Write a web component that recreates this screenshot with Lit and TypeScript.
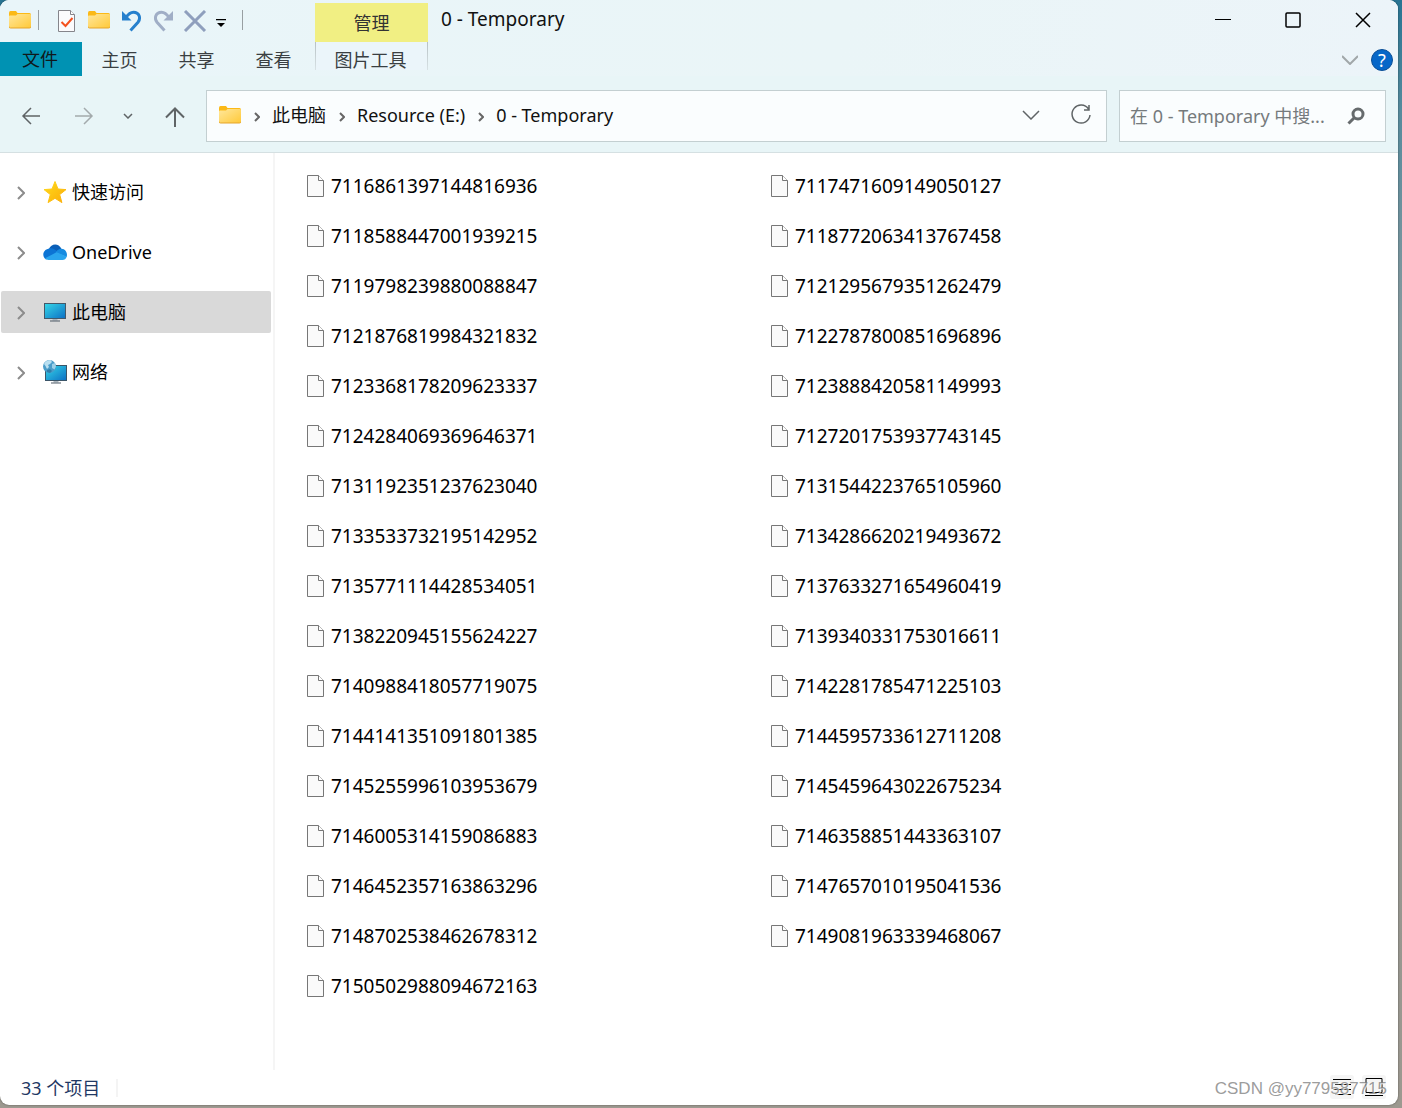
import { LitElement, html, css, svg } from "lit";
import { customElement, property, state } from "lit/decorators.js";

const FILES = [
  "7116861397144816936", "7117471609149050127",
  "7118588447001939215", "7118772063413767458",
  "7119798239880088847", "7121295679351262479",
  "7121876819984321832", "7122787800851696896",
  "7123368178209623337", "7123888420581149993",
  "7124284069369646371", "7127201753937743145",
  "7131192351237623040", "7131544223765105960",
  "7133533732195142952", "7134286620219493672",
  "7135771114428534051", "7137633271654960419",
  "7138220945155624227", "7139340331753016611",
  "7140988418057719075", "7142281785471225103",
  "7144141351091801385", "7144595733612711208",
  "7145255996103953679", "7145459643022675234",
  "7146005314159086883", "7146358851443363107",
  "7146452357163863296", "7147657010195041536",
  "7148702538462678312", "7149081963339468067",
  "7150502988094672163",
];

const folderIcon = html`<svg width="22" height="18" viewBox="0 0 22 18" aria-hidden="true">
  <defs><linearGradient id="f" x1="0" y1="0" x2="1" y2="1"><stop offset="0" stop-color="#ffe79c"/><stop offset="1" stop-color="#ffc938"/></linearGradient></defs>
  <path d="M0 2q0-2 1.500-2h5.500l1.500 2H20.500q1.500 0 1.500 1.500V10H0z" fill="#fbb917"/>
  <path d="M0 5.500q0-1 1-1h6l1.500-1.500H21q1 0 1 1V15.500q0 1.500-1.500 1.500h-19Q0 17 0 15.500z" fill="url(#f)"/>
  <path d="M0 15.500Q0 17 1.500 17h19q1.500 0 1.500-1.500" fill="none" stroke="#e5a52a" stroke-width="1"/>
</svg>`;

const fileIcon = html`<svg width="18" height="22" viewBox="0 0 18 22" aria-hidden="true">
  <path d="M.5.5h11l5 5v16H.5z" fill="#fafafa" stroke="#777"/>
  <path d="M11.500.5v5h5" fill="#fff" stroke="#777"/>
</svg>`;

const checkedPageIcon = html`<svg width="18" height="22" viewBox="0 0 18 22" aria-hidden="true">
  <path d="M.5.500h12l4 4v17H.5z" fill="#fbfbfd" stroke="#85858b"/>
  <path d="M12.500.5v4h4" fill="#fff" stroke="#85858b"/>
  <path d="M3.500 12l4 4 7-8" fill="none" stroke="#f4511e" stroke-width="2"/>
</svg>`;

const undoShape = svg`<path d="M4 7.500C6.500 3.500 9 2.200 11.500 2.200c6 0 7.500 6.300 4.500 10L8.500 20.500" fill="none" stroke="currentColor" stroke-width="3"/><path d="M0 1v9.500h9.500z" fill="currentColor"/>`;
const undoIcon = html`<svg width="20" height="22" viewBox="0 0 20 22" aria-hidden="true">${undoShape}</svg>`;
const redoIcon = html`<svg width="20" height="22" viewBox="0 0 20 22" aria-hidden="true"><g transform="matrix(-1 0 0 1 19 0)">${undoShape}</g></svg>`;

const starIcon = html`<svg width="24" height="24" viewBox="0 0 24 24" aria-hidden="true">
  <defs><linearGradient id="s" x1="0" y1="0" x2="1" y2="1"><stop offset="0" stop-color="#ffdb1c"/><stop offset="1" stop-color="#fbac08"/></linearGradient></defs>
  <path d="M12 1.500l3 7.500 8 .6-6.300 5 2.200 8L12 18.300 5.100 22.600l2.200-8L1 9.600 9 9z" fill="url(#s)" stroke="url(#s)" stroke-linejoin="round"/>
</svg>`;

const cloudIcon = html`<svg width="24" height="16" viewBox="0 0 24 16" aria-hidden="true">
  <path d="M6 5C8-.5 15.500-1.500 18.500 5l-4 5z" fill="#0a5fb8"/>
  <path d="M6 4.500c3-.7 5 .5 6.500 1.600L16 9 3 15.500C-1 13-1 6 6 4.500z" fill="#0c74d4"/>
  <path d="M12.500 8.500c2-3 4-4 6-3.700C23 5 25 10 23.500 13z" fill="#178be0"/>
  <path d="M2 14.300L13.500 8.300 23.800 12.500C23 15 21.500 16 19.500 16H5.500C4 16 3 15.500 2 14.300z" fill="#2aa5ee"/>
</svg>`;

const screenDefs = svg`<defs><linearGradient id="m" x1="0" y1="0" x2="1" y2="1"><stop offset="0" stop-color="#36d8e8"/><stop offset="1" stop-color="#0c6fc4"/></linearGradient></defs>`;

const computerIcon = html`<svg width="24" height="24" viewBox="0 0 24 24" aria-hidden="true">${screenDefs}
  <rect x="1.500" y="3.500" width="21" height="15" fill="url(#m)" stroke="#44596a"/>
  <path d="M9.500 19h5v1.500h-5z" fill="#a9b3bb"/><path d="M7 20.500h10v1H7z" fill="#4e5b66"/>
</svg>`;

const networkIcon = html`<svg width="24" height="24" viewBox="0 0 24 24" aria-hidden="true">${screenDefs}
  <rect x="2.500" y="5.500" width="21" height="15" fill="url(#m)" stroke="#3b5568"/>
  <path d="M10.500 21h5v1.500h-5z" fill="#a9b3bb"/><path d="M8 22.500h10v1H8z" fill="#4e5b66"/>
  <circle cx="6.500" cy="6.500" r="6.500" fill="#4a9cc9"/>
  <path d="M1 4C2 1.500 5 0 7.500 0L9 2 7 4 5 5 6 7 4 9 2.500 6z" fill="#b9dff0"/>
  <path d="M9 4l3-1 1 3.500-1.500 3L9 8z" fill="#9bd0e8"/>
  <path d="M4 10l3-1 2 2-2 2-3-1z" fill="#2f7da9"/>
</svg>`;

const stroke = (w: number, h: number, d: string, width = 1.5) => html`<svg
  width=${w} height=${h} viewBox="0 0 ${w} ${h}" fill="none" stroke="currentColor"
  stroke-width=${width} aria-hidden="true"><path d=${d} /></svg>`;

const base = css`
  :host, * { box-sizing: border-box; }
  button {
    display: flex; align-items: center; justify-content: center; flex: none;
    margin: 0; padding: 0; border: 0; background: none; font: inherit; color: inherit;
  }
  svg { display: block; flex: none; }
  ul { margin: 0; padding: 0; list-style: none; }
`;

@customElement("title-bar")
class TitleBar extends LitElement {
  static styles = [base, css`
    :host { display: flex; height: 42px; }
    .quick { display: flex; align-items: center; width: 315px; padding: 0 0 2px 9px; }
    .quick .sep { width: 1px; height: 20px; background: #989fa2; }
    .app { margin-right: 7px; }
    .page { width: 18px; margin: 2px 12px 0 19px; }
    .folder { width: 22px; margin-right: 12px; }
    .undo { width: 20px; color: #2680cd; margin-right: 12px; padding-top: 2px; }
    .redo { width: 20px; color: #a0aec6; margin-right: 9px; padding-top: 2px; }
    .delete { width: 24px; color: #8f9fbd; margin-right: 9px; padding-top: 2px; }
    .more { width: 10px; margin-right: 16px; padding-top: 6px; color: #000; }
    .context {
      display: flex; align-items: center; justify-content: center;
      width: 113px; margin-top: 3px; background: #f1ef83; color: #333;
    }
    .title { margin: 0; padding-left: 13px; font: inherit; font-size: 19px; line-height: 38px; flex: 1; color: #111; }
    .caption { width: 70px; height: 40px; color: #000; }
  `];
  render() {
    return html`
      <div class="quick">
        <span class="app">${folderIcon}</span><span class="sep"></span>
        <button class="page" aria-label="属性">${checkedPageIcon}</button>
        <button class="folder" aria-label="新建文件夹">${folderIcon}</button>
        <button class="undo" aria-label="撤消">${undoIcon}</button>
        <button class="redo" aria-label="恢复">${redoIcon}</button>
        <button class="delete" aria-label="删除">${stroke(24, 22, "M2 1L22 21M22 1L2 21", 3)}</button>
        <button class="more" aria-label="自定义快速访问工具栏">
          <svg width="10" height="8" viewBox="0 0 10 8" aria-hidden="true"><path d="M0 0h10v1.200H0zM1 4h8L5 8z"/></svg>
        </button>
        <span class="sep"></span>
      </div>
      <div class="context">管理</div>
      <h1 class="title">0 - Temporary</h1>
      <button class="caption" aria-label="最小化">${stroke(16, 16, "M0 7.500h16", 1)}</button>
      <button class="caption" aria-label="最大化">
        <svg width="16" height="16" viewBox="0 0 16 16" fill="none" stroke="currentColor" stroke-width="1.500" aria-hidden="true"><rect x="1" y="1" width="14" height="14" rx="1"/></svg>
      </button>
      <button class="caption" aria-label="关闭">${stroke(16, 16, "M1 1l14 14M15 1L1 15")}</button>`;
  }
}

@customElement("ribbon-tabs")
class RibbonTabs extends LitElement {
  static styles = [base, css`
    :host { display: flex; height: 34px; color: #3a3f42; }
    .tab { width: 77px; padding: 2px 2px 0 0; }
    .file { width: 82px; padding-right: 2px; background: #0092b3; color: #10181b; }
    .picture {
      width: 113px; height: 28px; margin: 0 auto 0 2px; padding: 8px 2px 0 0;
      border: 1px solid; border-width: 0 1px;
      border-image: linear-gradient(#b5bfc2, #d9e3e6) 1;
      background: #ebf5fa;
    }
    .expand { width: 24px; color: #a1a7a9; padding: 2px 2px 0 0; }
    .help {
      width: 22px; height: 22px; margin: 7px 5px 0 8px; border-radius: 50%;
      background: #0767c8; border: 1px solid #0b4f96; color: #fff; font-size: 18px; line-height: 20px;
    }
  `];
  render() {
    return html`
      <button class="file">文件</button>
      ${["主页", "共享", "查看"].map((t) => html`<button class="tab">${t}</button>`)}
      <button class="picture">图片工具</button>
      <button class="expand" aria-label="展开功能区">${stroke(16, 10, "M0 1l8 8 8-8", 2)}</button>
      <button class="help" aria-label="帮助">?</button>`;
  }
}

@customElement("address-row")
class AddressRow extends LitElement {
  static styles = [base, css`
    :host {
      display: flex; height: 77px; padding: 14px 12px 10px 0; border-bottom: 1px solid #d5e0e2;
      color: #5f6466;
    }
    .history { display: flex; align-items: center; width: 206px; flex: none; }
    .back { padding-left: 4px; width: 57px; }
    .forward { width: 54px; color: #a3aaac; }
    .recent { width: 34px; }
    .up { width: 60px; padding-top: 2px; }
    .address, .search {
      display: flex; align-items: center; height: 52px; border: 1px solid #c3cfd1; background: #fafdfe;
    }
    .address { flex: 1; min-width: 0; padding: 0 0 2px 12px; }
    .crumbs { display: flex; align-items: center; flex: 1; color: #111; }
    .crumbs li { display: flex; align-items: center; }
    .crumbs a { color: inherit; text-decoration: none; line-height: 24px; }
    .mark { display: flex; justify-content: center; width: 31px; padding-top: 3px; color: #666; }
    .drop, .reload { width: 50px; height: 50px; }
    .search { width: 267px; margin-left: 12px; padding: 0 20px 0 10px; }
    .search input {
      flex: 1; min-width: 0; padding: 0; border: 0; outline: 0; background: none;
      font: inherit; color: #111;
    }
    .search input::placeholder { color: #757a7c; opacity: 1; }
  `];
  @property({ attribute: false }) path: string[] = [];
  render() {
    const mark = html`<span class="mark">${stroke(6, 10, "M1 1l4 4-4 4", 2)}</span>`;
    return html`
      <div class="history">
        <button class="back" aria-label="后退">${stroke(20, 18, "M19 9H2M10 1L2 9l8 8")}</button>
        <button class="forward" aria-label="前进">${stroke(20, 18, "M1 9h17M10 1l8 8-8 8")}</button>
        <button class="recent" aria-label="最近浏览的位置">${stroke(10, 6, "M1 1l4 4 4-4")}</button>
        <button class="up" aria-label="上移">${stroke(20, 20, "M10 20V2M1 10.500L10 1.500l9 9", 2)}</button>
      </div>
      <div class="address">
        ${folderIcon}
        <ul class="crumbs">${this.path.map((p) => html`<li>${mark}<a href="#">${p}</a></li>`)}</ul>
        <button class="drop" aria-label="以前的位置">${stroke(18, 10, "M1 1l8 8 8-8")}</button>
        <button class="reload" aria-label="刷新">${stroke(22, 22, "M18.500 5A9 9 0 1 0 20 11M19 1v5h-5")}</button>
      </div>
      <div class="search">
        <input type="search" aria-label="搜索" placeholder="在 0 - Temporary 中搜..." />
        <button aria-label="开始搜索">
          <svg width="18" height="18" viewBox="0 0 18 18" fill="none" stroke="#666b6d" stroke-width="3" aria-hidden="true"><circle cx="11" cy="7" r="5"/><path d="M7.500 10.500L1.500 16.500"/></svg>
        </button>
      </div>`;
  }
}

@customElement("side-tree")
class SideTree extends LitElement {
  static styles = [base, css`
    :host { display: block; padding: 18px 2px 0 1px; }
    .list { display: flex; flex-direction: column; gap: 18px; }
    .item {
      display: flex; justify-content: flex-start; width: 100%; height: 42px;
      padding-left: 16px; border-radius: 2px; color: #000;
    }
    .item.on { background: #d9d9d9; }
    .chevron { color: #8c8c8c; padding-top: 2px; margin-right: 18px; }
    .label { margin-left: 5px; line-height: 24px; }
  `];
  @state() private current = 2;
  render() {
    const items: [string, unknown][] = [
      ["快速访问", starIcon], ["OneDrive", cloudIcon], ["此电脑", computerIcon], ["网络", networkIcon],
    ];
    return html`<ul class="list">${items.map(([name, icon], i) => html`<li>
      <button class="item ${i === this.current ? "on" : ""}" @click=${() => (this.current = i)}>
        <span class="chevron">${stroke(8, 14, "M1 1l6 6-6 6", 2)}</span>${icon}<span class="label">${name}</span>
      </button></li>`)}</ul>`;
  }
}

@customElement("file-list")
class FileList extends LitElement {
  static styles = [base, css`
    :host { display: block; padding: 8px 0 0 32px; }
    .grid { display: grid; grid-template-columns: repeat(auto-fill, 464px); grid-auto-rows: 50px; }
    .file { display: flex; align-items: center; gap: 6px; font-size: 19px; line-height: 24px; color: #000; }
  `];
  @property({ attribute: false }) files: string[] = [];
  render() {
    return html`<ul class="grid">${this.files.map((f) => html`<li class="file">${fileIcon}<span>${f}</span></li>`)}</ul>`;
  }
}

@customElement("status-bar")
class StatusBar extends LitElement {
  static styles = [base, css`
    :host { display: flex; align-items: center; height: 35px; padding: 0 12px 0 21px; color: #1f3864; position: relative; }
    .count { padding-right: 16px; border-right: 2px solid #f4f4f4; line-height: 18px; margin-right: auto; }
    .view { width: 24px; height: 24px; margin-left: 8px; background: #f5f5f5; border-radius: 3px; color: #000; margin-bottom: 2px; }
    .mark {
      position: absolute; right: 11px; top: 9px; font: 17px/20px "Liberation Sans", Arial, sans-serif;
      color: rgba(130, 130, 130, 0.8); text-shadow: 1px 1px 0 rgba(255, 255, 255, 0.8); pointer-events: none;
    }
  `];
  @property({ type: Number }) count = 0;
  render() {
    return html`
      <span class="count">${this.count} 个项目</span>
      <button class="view" aria-label="详细信息">${stroke(18, 18, "M0 1.500h18M2 6.500h16M0 11.500h18M2 16.500h16", 1)}</button>
      <button class="view" aria-label="大图标">${stroke(18, 18, "M1 .5h16v14H1zM0 17.500h18", 1)}</button>
      <span class="mark">CSDN @yy779587715</span>`;
  }
}

@customElement("app-root")
class AppRoot extends LitElement {
  static styles = [base, css`
    :host {
      display: flex; min-height: 100vh; padding: 0 4px 3px 0;
      font: 18px/24px "Noto Sans", "Noto Sans CJK SC", sans-serif;
      background: linear-gradient(#287493, #568b9d 10%, #899b9f 30%, #91958f 60%, #9d9990);
    }
    .window {
      display: flex; flex-direction: column; flex: 1; min-width: 0; overflow: hidden;
      border-radius: 9px; background: #fff; box-shadow: 0 0 2px rgba(0, 0, 0, 0.5);
    }
    .top { background: linear-gradient(100deg, #e9f5f9, #eaf5f7 60%, #ecf4f9); }
    .nav { background: #e8f5f7; }
    .body { display: flex; flex: 1; }
    .side { width: 275px; flex: none; border-right: 2px solid #f5f5f5; }
    .main { flex: 1; min-width: 0; }
  `];
  render() {
    return html`<div class="window">
      <header class="top"><title-bar></title-bar><ribbon-tabs></ribbon-tabs></header>
      <address-row class="nav" .path=${["此电脑", "Resource (E:)", "0 - Temporary"]}></address-row>
      <div class="body">
        <side-tree class="side"></side-tree>
        <file-list class="main" .files=${FILES}></file-list>
      </div>
      <status-bar .count=${FILES.length}></status-bar>
    </div>`;
  }
}
